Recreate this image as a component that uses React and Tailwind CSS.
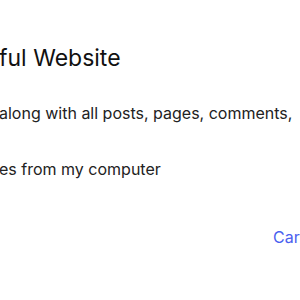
export default function App() {
  return (
    <div className="w-[300px] h-[300px] overflow-hidden bg-white" style={{ fontFamily: 'Inter, "Noto Sans", sans-serif' }}>
      <div className="flex flex-col ml-[-1px] pt-[44px]">
        <div className="whitespace-nowrap text-[23px] leading-[28px] text-[#111111]">ful Website</div>
        <div className="whitespace-nowrap mt-[31px] text-[16px] leading-[20px] text-[#222222]">along with all posts, pages, comments,</div>
        <div className="whitespace-nowrap mt-[36px] text-[16px] leading-[20px] text-[#222222]">es from my computer</div>
        <div className="flex mt-[48px] pl-[274px]">
          <span className="whitespace-nowrap text-[16px] leading-[20px] text-[#4b60ef]">Car</span>
        </div>
      </div>
    </div>
  );
}
